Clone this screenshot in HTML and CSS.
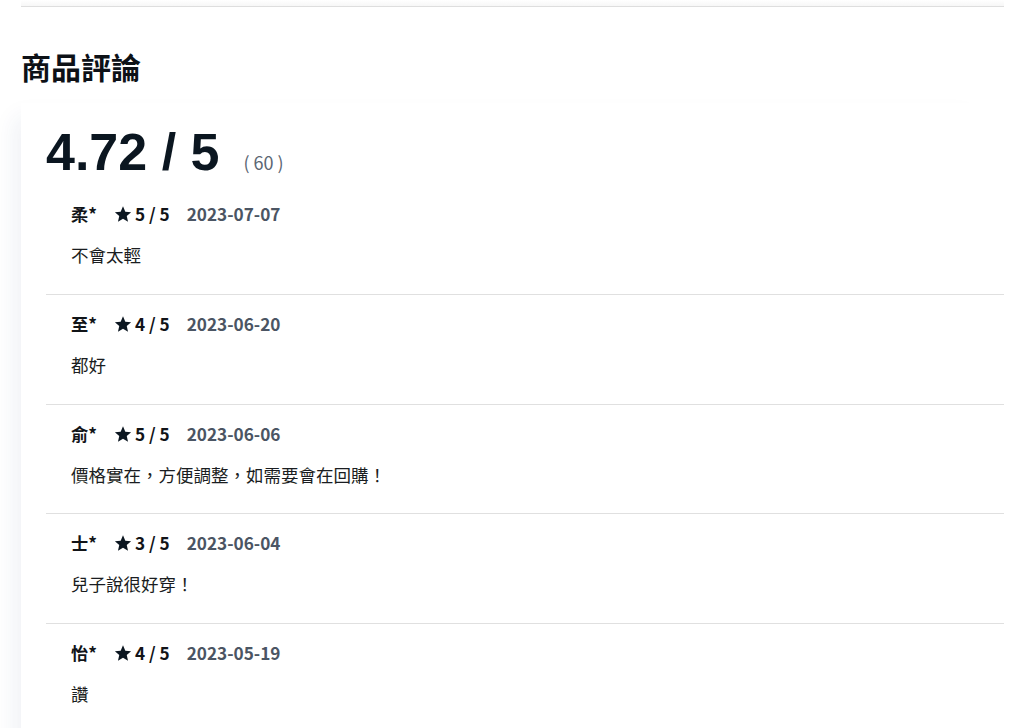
FILE: index.html
```html
<!DOCTYPE html>
<html lang="zh-Hant">
<head>
<meta charset="utf-8">
<title>商品評論</title>
<link rel="stylesheet" href="styles.css">
</head>
<body>
<div class="page">
  <div class="topbar"></div>
  <h2 class="title">商品評論</h2>
  <section class="card">
    <div class="summary">
      <span class="score">4.72 / 5</span>
      <span class="count">( 60 )</span>
    </div>
    <ul class="reviews">
      <li class="review">
        <div class="meta">
          <span class="name">柔*</span>
          <span class="rating"><svg class="star" viewBox="0 0 24 24"><path d="M12 1.8l3.1 7.1 7.7.7-5.8 5.1 1.7 7.6L12 18.3l-6.7 4 1.7-7.6L1.2 9.6l7.7-.7z"/></svg>5 / 5</span>
          <span class="date">2023-07-07</span>
        </div>
        <p class="comment">不會太輕</p>
      </li>
      <li class="review">
        <div class="meta">
          <span class="name">至*</span>
          <span class="rating"><svg class="star" viewBox="0 0 24 24"><path d="M12 1.8l3.1 7.1 7.7.7-5.8 5.1 1.7 7.6L12 18.3l-6.7 4 1.7-7.6L1.2 9.6l7.7-.7z"/></svg>4 / 5</span>
          <span class="date">2023-06-20</span>
        </div>
        <p class="comment">都好</p>
      </li>
      <li class="review">
        <div class="meta">
          <span class="name">俞*</span>
          <span class="rating"><svg class="star" viewBox="0 0 24 24"><path d="M12 1.8l3.1 7.1 7.7.7-5.8 5.1 1.7 7.6L12 18.3l-6.7 4 1.7-7.6L1.2 9.6l7.7-.7z"/></svg>5 / 5</span>
          <span class="date">2023-06-06</span>
        </div>
        <p class="comment">價格實在，方便調整，如需要會在回購！</p>
      </li>
      <li class="review">
        <div class="meta">
          <span class="name">士*</span>
          <span class="rating"><svg class="star" viewBox="0 0 24 24"><path d="M12 1.8l3.1 7.1 7.7.7-5.8 5.1 1.7 7.6L12 18.3l-6.7 4 1.7-7.6L1.2 9.6l7.7-.7z"/></svg>3 / 5</span>
          <span class="date">2023-06-04</span>
        </div>
        <p class="comment">兒子說很好穿！</p>
      </li>
      <li class="review">
        <div class="meta">
          <span class="name">怡*</span>
          <span class="rating"><svg class="star" viewBox="0 0 24 24"><path d="M12 1.8l3.1 7.1 7.7.7-5.8 5.1 1.7 7.6L12 18.3l-6.7 4 1.7-7.6L1.2 9.6l7.7-.7z"/></svg>4 / 5</span>
          <span class="date">2023-05-19</span>
        </div>
        <p class="comment">讚</p>
      </li>
    </ul>
  </section>
</div>
</body>
</html>
```

FILE: styles.css
```css
html, body {
  margin: 0;
  padding: 0;
  background: #ffffff;
}

body {
  font-family: "Noto Sans CJK TC", "Noto Sans", sans-serif;
  color: #111418;
  overflow: hidden;
}

.page {
  padding: 0 8px 0 21px;
}

.topbar {
  height: 6px;
  background: linear-gradient(#ffffff, #f7f7f7);
  border-bottom: 1px solid #dedede;
}

.title {
  margin: 41px 0 0 0;
  font-size: 30px;
  line-height: 36px;
  font-weight: 700;
  color: #0d1117;
}

.card {
  margin-top: 19px;
  padding: 19px 0 0 25px;
  background: #ffffff;
  box-shadow: -20px 0 22px -14px rgba(30, 60, 110, 0.07);
  min-height: 700px;
}

.summary {
  display: flex;
  align-items: baseline;
  gap: 24px;
}

.score {
  font-family: "Liberation Sans", Arial, sans-serif;
  font-size: 52px;
  line-height: 60px;
  font-weight: 700;
  color: #0b1620;
}

.count {
  font-size: 18px;
  color: #5b6673;
}

.reviews {
  list-style: none;
  margin: 3px 0 0 0;
  padding: 0;
}

.review {
  padding: 18px 0 27px 25px;
  border-bottom: 1px solid #e0e0e0;
}

.review:nth-child(2n+1) {
  padding-bottom: 26px;
}

.review:first-child {
  padding-bottom: 27px;
}

.meta {
  display: flex;
  align-items: center;
  height: 22px;
  font-size: 17.2px;
  font-weight: 700;
  line-height: 22px;
}

.name {
  color: #111418;
  margin-right: 17px;
}

.rating {
  display: flex;
  align-items: center;
  color: #111418;
  margin-right: 17px;
}

.star {
  width: 18px;
  height: 18px;
  fill: #0b1620;
  margin-right: 3px;
}

.date {
  color: #4b5563;
}

.comment {
  margin: 18px 0 0 0;
  font-size: 17.5px;
  line-height: 24px;
  color: #1a1d21;
}
```
